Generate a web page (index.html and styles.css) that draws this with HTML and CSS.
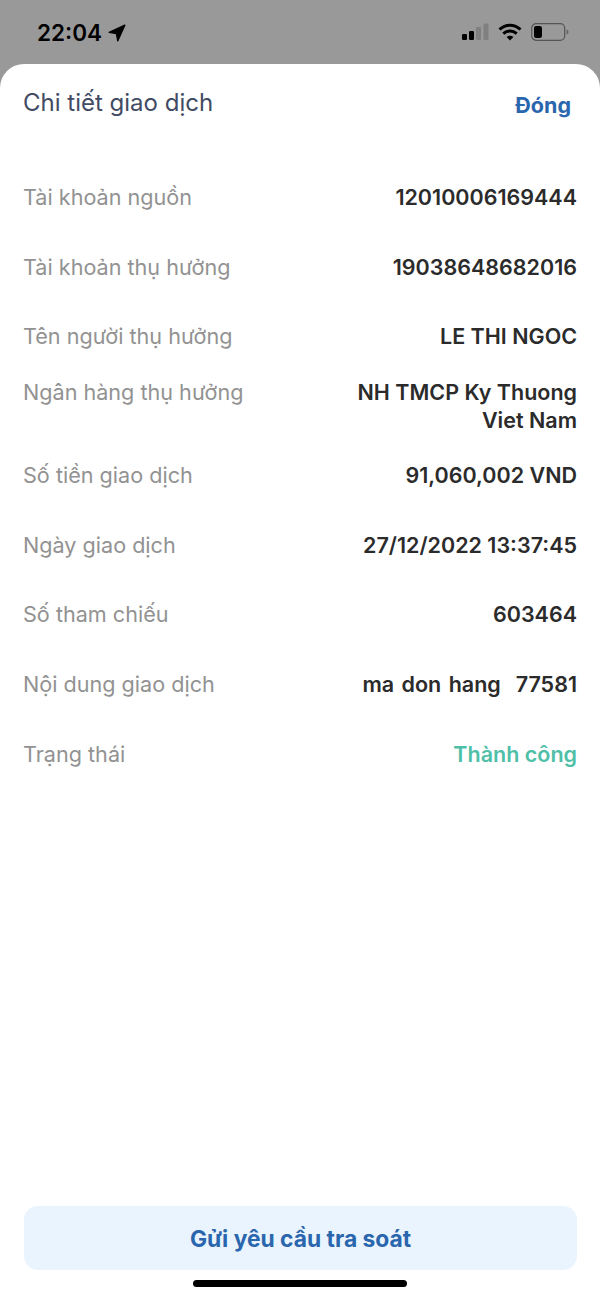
FILE: index.html
```html
<!DOCTYPE html>
<html lang="vi">
<head>
    <meta charset="UTF-8">
    <title>Chi tiết giao dịch</title>
    <link rel="stylesheet" href="styles.css">
</head>
<body>

<div class="status-bar">
    <div class="status-left">
        <span class="time">22:04</span>
        <svg class="location" width="18" height="18" viewBox="0 0 18 18"><path d="M16.8 1.2 L1.2 8.4 L8.4 9.6 L9.8 16.8 Z" fill="#000" stroke="#000" stroke-width="1.4" stroke-linejoin="round"/></svg>
    </div>
    <div class="status-right">
        <svg class="signal" width="28" height="18" viewBox="0 0 28 18">
            <rect x="0" y="11" width="5" height="6" rx="1.2" fill="#000"/>
            <rect x="7" y="8" width="5" height="9" rx="1.2" fill="#000"/>
            <rect x="14" y="4" width="5" height="13" rx="1.2" fill="#808080"/>
            <rect x="21.5" y="0.5" width="5" height="16.5" rx="1.2" fill="#808080"/>
        </svg>
        <svg width="24" height="18" viewBox="0 0 24 18" fill="none" stroke="#000" stroke-width="3">
            <path d="M1.5 6.5 C7.5 0.8 16.5 0.8 22.5 6.5"/>
            <path d="M5.3 10.6 C9.2 7 14.8 7 18.7 10.6"/>
            <path d="M12 17.5 L8.6 14 C10.6 12.4 13.4 12.4 15.4 14 Z" fill="#000" stroke="none"/>
        </svg>
        <svg width="38" height="18" viewBox="0 0 38 18" class="battery">
            <rect x="0.7" y="0.7" width="33" height="16.6" rx="4.5" fill="none" stroke="#555" stroke-width="1.2"/>
            <rect x="3" y="3" width="8" height="12" rx="2.2" fill="#000"/>
            <path d="M35.5 6.5 C37 7 37.5 8 37.5 9 C37.5 10 37 11 35.5 11.5 Z" fill="#666"/>
        </svg>
    </div>
</div>

<div class="sheet">
    <div class="sheet-header">
        <h2>Chi tiết giao dịch</h2>
        <a class="close">Đóng</a>
    </div>

    <div class="details">
        <div class="row">
            <span class="label">Tài khoản nguồn</span>
            <span class="value">12010006169444</span>
        </div>
        <div class="row">
            <span class="label">Tài khoản thụ hưởng</span>
            <span class="value">19038648682016</span>
        </div>
        <div class="row row-tight">
            <span class="label">Tên người thụ hưởng</span>
            <span class="value">LE THI NGOC</span>
        </div>
        <div class="row row-bank">
            <span class="label">Ngân hàng thụ hưởng</span>
            <span class="value">NH TMCP Ky Thuong<br>Viet Nam</span>
        </div>
        <div class="row">
            <span class="label">Số tiền giao dịch</span>
            <span class="value">91,060,002 VND</span>
        </div>
        <div class="row">
            <span class="label">Ngày giao dịch</span>
            <span class="value">27/12/2022 13:37:45</span>
        </div>
        <div class="row">
            <span class="label">Số tham chiếu</span>
            <span class="value">603464</span>
        </div>
        <div class="row">
            <span class="label">Nội dung giao dịch</span>
            <span class="value wide">ma don hang&nbsp; 77581</span>
        </div>
        <div class="row">
            <span class="label">Trạng thái</span>
            <span class="value success">Thành công</span>
        </div>
    </div>

    <button class="action" type="button">Gửi yêu cầu tra soát</button>
    <div class="home-indicator"></div>
</div>

</body>
</html>
```

FILE: styles.css
```css
* {
    box-sizing: border-box;
}
html, body {
    height: 100%;
}
body {
    margin: 0;
    height: 1299px;
    overflow: hidden;
    display: flex;
    flex-direction: column;
    background: #999999;
    font-family: "Inter", "Noto Sans", sans-serif;
}
.status-bar {
    height: 64px;
    flex: none;
    display: flex;
    justify-content: space-between;
    align-items: flex-start;
    padding: 23px 31px 0 37px;
}
.status-left {
    display: flex;
    align-items: center;
    gap: 6px;
}
.time {
    font-size: 22.5px;
    line-height: 20px;
    font-weight: 600;
    color: #000;
}
.status-right {
    display: flex;
    align-items: center;
    gap: 9px;
}
.signal {
    margin-right: -1px;
}
.sheet {
    flex: 1;
    background: white;
    border-radius: 24px 24px 0 0;
    padding: 0 23px;
    display: flex;
    flex-direction: column;
}
.sheet-header {
    display: flex;
    justify-content: space-between;
    padding-top: 24px;
    padding-right: 6px;
}
h2 {
    margin: 0;
    font-size: 24px;
    line-height: 30px;
    font-weight: 400;
    color: #424b63;
}
.close {
    font-size: 21.5px;
    line-height: 34px;
    font-weight: 700;
    color: #2a66ad;
}
.details {
    padding-top: 61px;
}
.row {
    display: flex;
    justify-content: space-between;
    align-items: flex-start;
    line-height: 28px;
    margin-bottom: 41.6px;
}
.row-tight {
    margin-bottom: 28px;
}
.row-bank {
    margin-bottom: 27px;
}
.label {
    font-size: 21.6px;
    color: #929292;
}
.value {
    font-size: 21.5px;
    text-align: right;
    font-weight: 600;
    color: #2b2b2b;
}
.wide {
    word-spacing: 2px;
}
.success {
    color: #4fbfa8;
}
.action {
    margin-top: auto;
    margin-left: 1px;
    height: 64px;
    flex: none;
    border: none;
    border-radius: 14px;
    background: #eaf4fe;
    color: #2a66ad;
    font-family: inherit;
    font-size: 22.8px;
    font-weight: 700;
}
.home-indicator {
    width: 214px;
    height: 7px;
    flex: none;
    margin: 10px auto 12px;
    border-radius: 4px;
    background: #000;
}
```
